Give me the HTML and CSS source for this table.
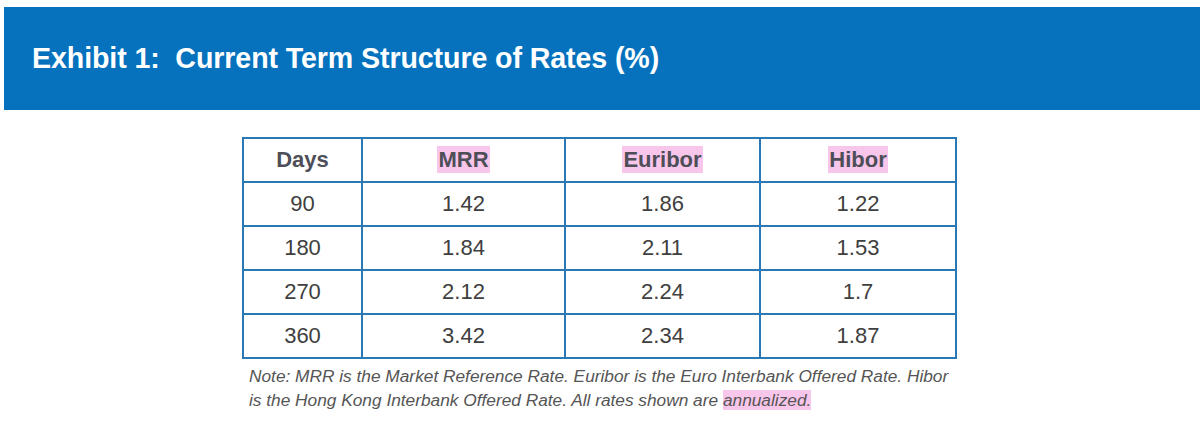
FILE: index.html
```html
<!DOCTYPE html>
<html>
<head>
<meta charset="utf-8">
<link rel="stylesheet" href="styles.css">
</head>
<body>
<div class="banner"><h1 class="title">Exhibit 1:&nbsp; Current Term Structure of Rates (%)</h1></div>
<div class="content">
  <table class="rates">
    <colgroup>
      <col class="c1"><col class="c2"><col class="c3"><col class="c4">
    </colgroup>
    <thead>
      <tr><th>Days</th><th><span class="hl">MRR</span></th><th><span class="hl">Euribor</span></th><th><span class="hl">Hibor</span></th></tr>
    </thead>
    <tbody>
      <tr><td>90</td><td>1.42</td><td>1.86</td><td>1.22</td></tr>
      <tr><td>180</td><td>1.84</td><td>2.11</td><td>1.53</td></tr>
      <tr><td>270</td><td>2.12</td><td>2.24</td><td>1.7</td></tr>
      <tr><td>360</td><td>3.42</td><td>2.34</td><td>1.87</td></tr>
    </tbody>
  </table>
  <p class="note">Note: MRR is the Market Reference Rate. Euribor is the Euro Interbank Offered Rate. Hibor is the Hong Kong Interbank Offered Rate. All rates shown are <span class="hl-note">annualized.</span></p>
</div>
</body>
</html>
```
FILE: styles.css
```css
html, body {
  margin: 0;
  padding: 0;
  background: #ffffff;
  font-family: "Liberation Sans", Arial, sans-serif;
}
.banner {
  margin: 7px 0 0 4px;
  height: 103px;
  background: #0672be;
  display: flex;
  align-items: center;
  padding-left: 28px;
}
.title {
  margin: 0;
  color: #ffffff;
  font-size: 28.6px;
  font-weight: bold;
  letter-spacing: -0.1px;
}
.content {
  margin-left: 242px;
  padding-top: 27px;
}
.rates {
  border-collapse: collapse;
  width: 713px;
  table-layout: fixed;
  border: 2px solid #2a78b4;
}
.c1 { width: 119px; }
.c2 { width: 203px; }
.c3 { width: 195px; }
.c4 { width: 196px; }
.rates th, .rates td {
  border: 2px solid #2a78b4;
  height: 42px;
  padding: 0;
  text-align: center;
  font-size: 22px;
  color: #404040;
}
.rates th {
  font-weight: bold;
  color: #4e4e58;
}
.hl {
  background: #f9c6eb;
  padding: 1px 1px;
}
.hl-note {
  background: #f9c6eb;
}
.note {
  margin: 5px 0 0 7px;
  width: 705px;
  font-size: 17.3px;
  line-height: 24px;
  font-style: italic;
  color: #555555;
}
```
